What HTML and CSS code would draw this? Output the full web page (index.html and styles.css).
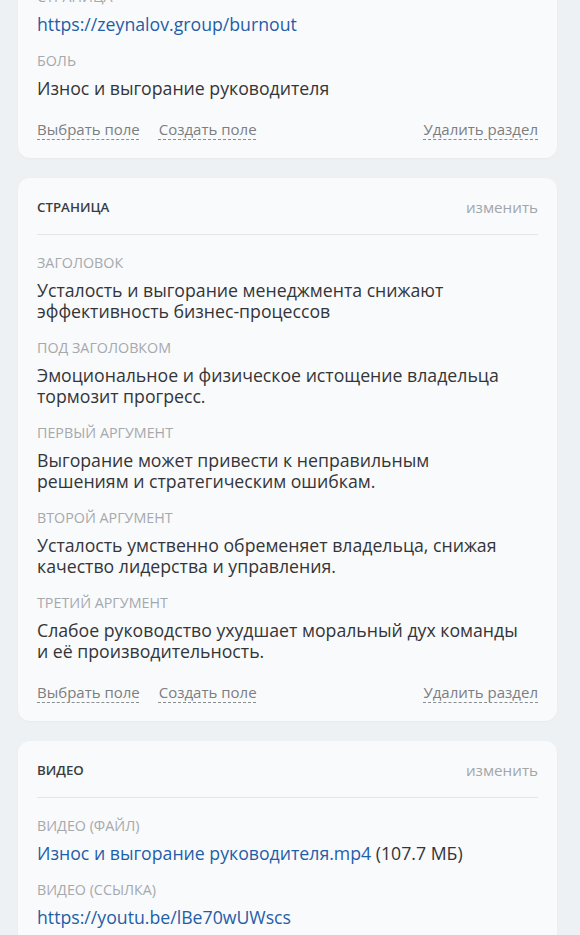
FILE: index.html
```html
<!DOCTYPE html>
<html lang="ru">
<head>
<meta charset="utf-8">
<title>Разделы</title>
<link rel="stylesheet" href="styles.css">
</head>
<body>
<div class="page">
  <section class="card card-cut">
    <div class="fields">
      <div class="field">
        <div class="label">Страница</div>
        <div class="value"><a class="link" href="#">https://zeynalov.group/burnout</a></div>
      </div>
      <div class="field">
        <div class="label">Боль</div>
        <div class="value">Износ и выгорание руководителя</div>
      </div>
    </div>
    <div class="actions">
      <span class="action">Выбрать поле</span>
      <span class="action">Создать поле</span>
      <span class="action action-right">Удалить раздел</span>
    </div>
  </section>

  <section class="card">
    <header class="card-head">
      <h2 class="card-title">Страница</h2>
      <span class="edit">изменить</span>
    </header>
    <div class="fields">
      <div class="field">
        <div class="label">Заголовок</div>
        <div class="value">Усталость и выгорание менеджмента снижают эффективность бизнес-процессов</div>
      </div>
      <div class="field">
        <div class="label">Под заголовком</div>
        <div class="value">Эмоциональное и физическое истощение владельца тормозит прогресс.</div>
      </div>
      <div class="field">
        <div class="label">Первый аргумент</div>
        <div class="value">Выгорание может привести к неправильным решениям и стратегическим ошибкам.</div>
      </div>
      <div class="field">
        <div class="label">Второй аргумент</div>
        <div class="value">Усталость умственно обременяет владельца, снижая качество лидерства и управления.</div>
      </div>
      <div class="field">
        <div class="label">Третий аргумент</div>
        <div class="value">Слабое руководство ухудшает моральный дух команды и её производительность.</div>
      </div>
    </div>
    <div class="actions">
      <span class="action">Выбрать поле</span>
      <span class="action">Создать поле</span>
      <span class="action action-right">Удалить раздел</span>
    </div>
  </section>

  <section class="card">
    <header class="card-head">
      <h2 class="card-title">Видео</h2>
      <span class="edit">изменить</span>
    </header>
    <div class="fields">
      <div class="field">
        <div class="label">Видео (файл)</div>
        <div class="value"><a class="link" href="#">Износ и выгорание руководителя.mp4</a> (107.7 МБ)</div>
      </div>
      <div class="field">
        <div class="label">Видео (ссылка)</div>
        <div class="value"><a class="link" href="#">https://youtu.be/lBe70wUWscs</a></div>
      </div>
    </div>
  </section>
</div>
</body>
</html>
```

FILE: styles.css
```css
html, body {
  margin: 0;
  padding: 0;
  background: #eef1f4;
}
body {
  font-family: "Open Sans", "Noto Sans", sans-serif;
  color: #333538;
  overflow: hidden;
}
.page {
  display: flex;
  flex-direction: column;
  gap: 20px;
  margin: -31px 23px 0 18px;
}
.card {
  background: #f9fafc;
  border-radius: 12px;
  padding: 20px 19px 19px;
  box-shadow: 0 1px 2px rgba(0, 0, 0, 0.03);
}
.card-cut {
  padding-top: 18px;
}
.card-head {
  display: flex;
  align-items: center;
  justify-content: space-between;
  padding-bottom: 18px;
  border-bottom: 1px solid #e4e7ea;
}
.card-title {
  margin: 0;
  font-size: 13.3px;
  line-height: 18px;
  font-weight: 600;
  text-transform: uppercase;
  color: #3a3d40;
}
.edit {
  font-size: 15.2px;
  line-height: 18px;
  color: #a3a6a9;
}
.card-head + .fields {
  padding-top: 18px;
}
.field {
  margin-bottom: 16px;
}
.field:last-child {
  margin-bottom: 0;
}
.label {
  font-size: 14.3px;
  line-height: 20px;
  text-transform: uppercase;
  color: #a6a9ac;
  margin-bottom: 7px;
}
.value {
  max-width: 482px;
  font-size: 17.7px;
  line-height: 21px;
  color: #333538;
}
.link {
  color: #1f5ea8;
  text-decoration: none;
}
.actions {
  display: flex;
  gap: 19px;
  margin-top: 20px;
}
.action {
  font-size: 15px;
  line-height: 20px;
  color: #7b7e81;
  text-decoration: underline dashed #8a8d90;
  text-decoration-thickness: 1px;
  text-underline-offset: 4px;
}
.action-right {
  margin-left: auto;
}
```
